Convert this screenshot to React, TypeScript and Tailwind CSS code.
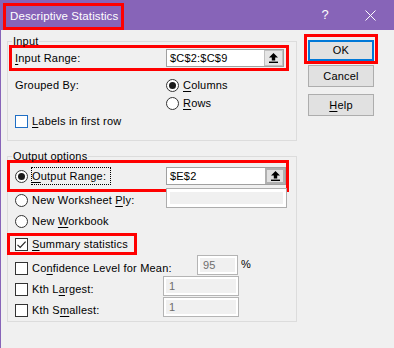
import React from "react";

const U = ({ children }: { children: React.ReactNode }) => (
  <span className="underline decoration-1 underline-offset-[2px]">{children}</span>
);

function Arrow() {
  return (
    <svg width="9" height="10" viewBox="0 0 9 10">
      <path d="M4.5 0 L9 4.5 H6.2 V7.6 H2.8 V4.5 H0 Z" fill="#000" />
      <rect x="0" y="8.6" width="9" height="1.4" fill="#000" />
    </svg>
  );
}

function RangeField({ value, wide }: { value: string; wide?: boolean }) {
  return (
    <div
      className={
        wide
          ? "flex h-[18px] w-[120px] border border-[#a0a0a0] bg-white"
          : "flex h-[18px] w-[118px] border border-[#a0a0a0] bg-white"
      }
    >
      <div className="flex-1 pl-[3px] leading-[16px]">{value}</div>
      <div
        className={
          wide
            ? "flex w-[20px] items-center justify-center border-2 border-[#b0b0b0] bg-[#e1e1e1]"
            : "flex w-[19px] items-center justify-center border border-[#c0c0c0] bg-[#e5e5e5]"
        }
      >
        <Arrow />
      </div>
    </div>
  );
}

function Radio({ checked }: { checked?: boolean }) {
  return (
    <span className="flex h-[13px] w-[13px] shrink-0 items-center justify-center rounded-full border border-[#333333] bg-white">
      {checked && <span className="h-[7px] w-[7px] rounded-full bg-[#1a1a1a]" />}
    </span>
  );
}

function Check({ checked, blue }: { checked?: boolean; blue?: boolean }) {
  return (
    <span
      className={
        blue
          ? "flex h-[13px] w-[13px] shrink-0 items-center justify-center border border-[#1f6fc5] bg-white"
          : "flex h-[13px] w-[13px] shrink-0 items-center justify-center border border-[#333333] bg-white"
      }
    >
      {checked && (
        <svg width="11" height="11" viewBox="0 0 11 11">
          <path d="M1.5 5.8 L4.2 8.5 L9.6 2.6" fill="none" stroke="#222" strokeWidth="1.2" />
        </svg>
      )}
    </span>
  );
}

function DisabledField({ value, w, h = "h-[20px]" }: { value?: string; w: string; h?: string }) {
  return (
    <div className={w + " " + h + " border border-[#b4b4b4] bg-white p-[2px]"}>
      <div className="h-full w-full bg-[#f0f0f0] pl-[3px] leading-[14px] text-[#6d6d6d]">{value}</div>
    </div>
  );
}

export default function App() {
  return (
    <div className="h-[348px] w-[394px] overflow-hidden bg-[#f0f0f0] font-['Liberation_Sans',Arial,sans-serif] text-[11px] leading-[13px] tracking-[0.2px] text-black">
      {/* Title bar */}
      <div className="flex h-[30px] items-center bg-[#8764b8] text-white">
        <div className="ml-[3px] mt-[3px] flex h-[27px] w-[121px] items-center self-start border-[3px] border-[#ff0000] pl-[4px] text-[11.5px] tracking-[0.1px]">
          Descriptive Statistics
        </div>
        <span className="ml-auto mr-[36px] text-[13px] leading-[14px]">?</span>
        <svg width="11" height="11" viewBox="0 0 11 11" className="mr-[18px]">
          <path d="M0.5 0.5 L10.5 10.5 M10.5 0.5 L0.5 10.5" stroke="#fff" strokeWidth="1" />
        </svg>
      </div>

      {/* Body */}
      <div className="flex h-[318px] border-l border-[#8764b8]">
        <div className="ml-[6px] w-[290px]">
          {/* Input group */}
          <fieldset className="mt-[6px] border border-[#dcdcdc] pb-[10px]">
            <legend className="ml-[4px] h-[10px] px-[1px] leading-[10px]">Input</legend>
            <div className="-mt-[1px] ml-[1px] flex h-[26px] w-[280px] items-center border-[3px] border-[#ff0000]">
              <span className="w-[154px] pl-[3px]">
                <U>I</U>nput Range:
              </span>
              <RangeField value="$C$2:$C$9" />
            </div>
            <div className="mt-[5px] flex h-[18px] items-center">
              <span className="ml-[7px] w-[151px]">Grouped By:</span>
              <Radio checked />
              <span className="ml-[4px]">
                <U>C</U>olumns
              </span>
            </div>
            <div className="flex h-[18px] items-center pl-[158px]">
              <Radio />
              <span className="ml-[4px]">
                <U>R</U>ows
              </span>
            </div>
            <div className="flex h-[18px] items-center pl-[7px]">
              <Check blue />
              <span className="ml-[4px]">
                <U>L</U>abels in first row
              </span>
            </div>
          </fieldset>

          {/* Output group */}
          <fieldset className="mt-[10px] border border-[#dcdcdc] pb-[3px]">
            <legend className="ml-[4px] h-[10px] px-[1px] leading-[10px]">Output options</legend>
            <div className="-ml-[1px] -mt-[1px] flex h-[32px] w-[282px] items-center border-[3px] border-[#ff0000]">
              <div className="flex w-[156px] items-center pl-[5px]">
                <Radio checked />
                <span className="ml-[3px] h-[18px] w-[80px] border border-dotted border-black leading-[16px]">
                  <U>O</U>utput Range:
                </span>
              </div>
              <RangeField value="$E$2" wide />
            </div>
            <div className="-mt-[4px] flex h-[23px] items-start">
              <div className="mt-[5px] flex h-[14px] w-[158px] items-center pl-[7px]">
                <Radio />
                <span className="ml-[4px]">
                  New Worksheet <U>P</U>ly:
                </span>
              </div>
              <div className="h-[20px] w-[121px] border border-[#adadad] bg-white p-[3px]">
                <div className="h-full w-full bg-[#f0f0f0]" />
              </div>
            </div>
            <div className="flex h-[21px] items-center pl-[7px]">
              <Radio />
              <span className="ml-[4px]">
                New <U>W</U>orkbook
              </span>
            </div>
            <div className="-ml-[1px] mt-[1px] flex h-[22px] w-[130px] items-center border-[3px] border-[#ff0000] pl-[5px]">
              <Check checked />
              <span className="ml-[4px]">
                <U>S</U>ummary statistics
              </span>
            </div>
            <div className="flex h-[21px] items-start">
              <div className="mt-[7px] flex h-[13px] w-[189px] items-center pl-[7px]">
                <Check />
                <span className="ml-[4px]">
                  Co<U>n</U>fidence Level for Mean:
                </span>
              </div>
              <DisabledField value="95" w="w-[41px]" />
              <span className="ml-[3px] mt-[3px]">%</span>
            </div>
            <div className="flex h-[21px] items-start">
              <div className="mt-[7px] flex h-[13px] w-[155px] items-center pl-[7px]">
                <Check />
                <span className="ml-[4px]">
                  Kth L<U>a</U>rgest:
                </span>
              </div>
              <DisabledField value="1" w="w-[76px]" />
            </div>
            <div className="flex h-[21px] items-start">
              <div className="mt-[7px] flex h-[13px] w-[155px] items-center pl-[7px]">
                <Check />
                <span className="ml-[4px]">
                  Kth S<U>m</U>allest:
                </span>
              </div>
              <DisabledField value="1" w="w-[76px]" />
            </div>
          </fieldset>
        </div>

        {/* Buttons */}
        <div className="ml-[7px] flex flex-col">
          <div className="mt-[4px] h-[30px] w-[74px] border-[3px] border-[#ff0000] pl-[1px] pt-[3px]">
            <div className="flex h-[21px] w-[66px] items-center justify-center border-2 border-[#0078d7] bg-[#e1e1e1]">
              OK
            </div>
          </div>
          <div className="ml-[4px] mt-[1px] flex h-[22px] w-[66px] items-center justify-center border border-[#adadad] bg-[#e1e1e1]">
            Cancel
          </div>
          <div className="ml-[4px] mt-[7px] flex h-[22px] w-[66px] items-center justify-center border border-[#adadad] bg-[#e1e1e1]">
            <span>
              <U>H</U>elp
            </span>
          </div>
        </div>
      </div>
    </div>
  );
}
